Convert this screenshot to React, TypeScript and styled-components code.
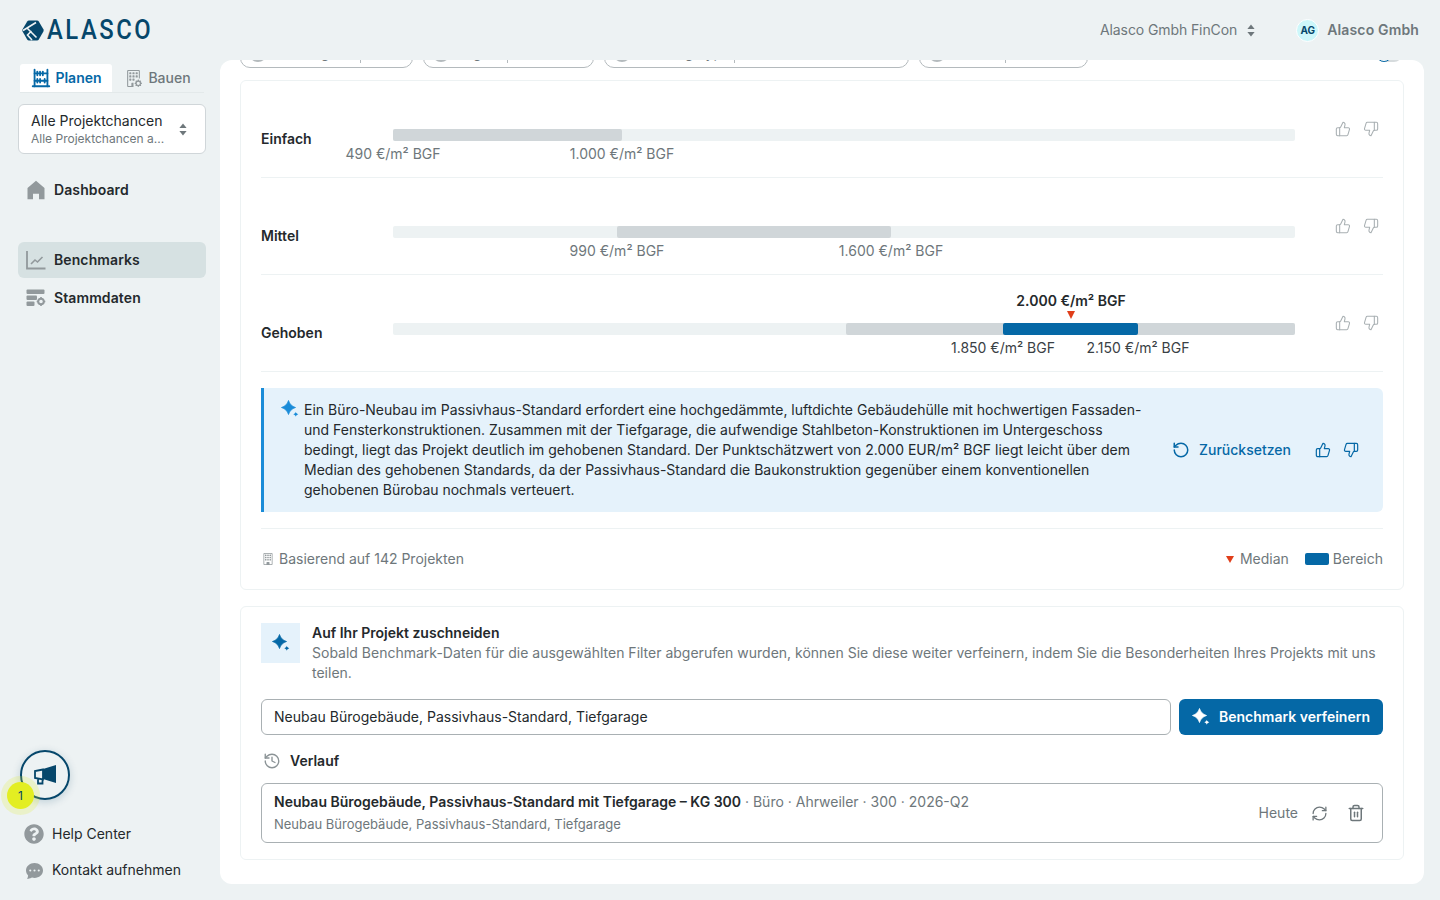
import styled, { createGlobalStyle } from "styled-components";
import { History, RefreshCw, RotateCcw, ThumbsDown, ThumbsUp, Trash2 } from "lucide-react";
import { BsBuilding, BsBuildingGear, BsChatDotsFill } from "react-icons/bs";
import { TbAbacus } from "react-icons/tb";
import { FaQuestionCircle } from "react-icons/fa";

const DARK = "#24292c";
const GREY = "#6e777b";
const BLUE = "#0568a6";
const NAVY = "#06476b";

const TIERS = [
  {
    label: "Einfach",
    range: { left: 0, right: 229 },
    low: "490 €/m² BGF",
    high: "1.000 €/m² BGF",
  },
  {
    label: "Mittel",
    range: { left: 224, right: 498 },
    low: "990 €/m² BGF",
    high: "1.600 €/m² BGF",
  },
  {
    label: "Gehoben",
    range: { left: 453, right: 902 },
    active: { left: 610, right: 745, median: 678 },
    low: "1.850 €/m² BGF",
    high: "2.150 €/m² BGF",
    medianLabel: "2.000 €/m² BGF",
  },
];

const CHIPS = [
  { width: 173, name: "Nutzung", nameWidth: 88, value: "Büro" },
  { width: 171, name: "Region", nameWidth: 52, value: "Ahrweiler" },
  { width: 305, name: "Nutzungstyp", nameWidth: 98, value: "Bürobau" },
  { width: 169, name: "Größe", nameWidth: 54, value: "300" },
];

function App() {
  return (
    <Page>
      <GlobalStyle />
      <Header>
        <Logo>
          <LogoMark />
          <LogoText>ALASCO</LogoText>
        </Logo>
        <HeaderRight>
          <CompanySwitch>
            Alasco Gmbh FinCon
            <UpDown />
          </CompanySwitch>
          <Avatar>AG</Avatar>
          <UserName>Alasco Gmbh</UserName>
        </HeaderRight>
      </Header>
      <Body>
        <Sidebar>
          <Tabs>
            <Tab $active>
              <TbAbacus size={22} />
              Planen
            </Tab>
            <Tab>
              <BsBuildingGear size={17} />
              Bauen
            </Tab>
          </Tabs>
          <ProjectSelect>
            <ProjectText>
              <ProjectName>Alle Projektchancen</ProjectName>
              <ProjectSub>Alle Projektchancen a...</ProjectSub>
            </ProjectText>
            <UpDown />
          </ProjectSelect>
          <NavGroup>
            <NavItem>
              <HomeIcon />
              Dashboard
            </NavItem>
          </NavGroup>
          <NavGroup>
            <NavItem $active>
              <ChartIcon />
              Benchmarks
            </NavItem>
            <NavItem>
              <DataIcon />
              Stammdaten
            </NavItem>
          </NavGroup>
          <SidebarBottom>
            <Announce>
              <MegaphoneIcon />
              <AnnounceBadge>1</AnnounceBadge>
            </Announce>
            <FooterLink>
              <FaQuestionCircle size={20} color="#92999c" />
              Help Center
            </FooterLink>
            <FooterLink>
              <BsChatDotsFill size={17} color="#92999c" style={{ margin: "0 1px 0 2px" }} />
              Kontakt aufnehmen
            </FooterLink>
          </SidebarBottom>
        </Sidebar>
        <Main>
          <ChipRow>
            {CHIPS.map((chip) => (
              <Chip key={chip.name} $width={chip.width}>
                <ChipDot />
                <ChipName $width={chip.nameWidth}>{chip.name}</ChipName>
                <ChipValue>{chip.value}</ChipValue>
              </Chip>
            ))}
            <Toggle>
              <ToggleKnob />
            </Toggle>
          </ChipRow>

          <Card>
            {TIERS.map((tier) => (
              <TierRow key={tier.label}>
                <TierLabel>{tier.label}</TierLabel>
                <Track>
                  <RangeBar $left={tier.range.left} $right={tier.range.right} />
                  {tier.active && (
                    <>
                      <ActiveBar $left={tier.active.left} $right={tier.active.right} />
                      <MedianValue $left={tier.active.median}>{tier.medianLabel}</MedianValue>
                      <MedianMark $left={tier.active.median} />
                    </>
                  )}
                  <RangeValue
                    $left={tier.active ? tier.active.left : tier.range.left}
                    $strong={!!tier.active}
                  >
                    {tier.low}
                  </RangeValue>
                  <RangeValue
                    $left={tier.active ? tier.active.right : tier.range.right}
                    $strong={!!tier.active}
                  >
                    {tier.high}
                  </RangeValue>
                </Track>
                <Votes $color="#a9b0b3">
                  <ThumbsUp size={16} strokeWidth={1.6} />
                  <ThumbsDown size={16} strokeWidth={1.6} />
                </Votes>
              </TierRow>
            ))}

            <Alert>
              <AlertIcon>
                <Sparkle size={18} color="#1a8cd8" />
              </AlertIcon>
              <AlertText>
                Ein Büro-Neubau im Passivhaus-Standard erfordert eine hochgedämmte, luftdichte
                Gebäudehülle mit hochwertigen Fassaden- und Fensterkonstruktionen. Zusammen mit der
                Tiefgarage, die aufwendige Stahlbeton-Konstruktionen im Untergeschoss bedingt, liegt
                das Projekt deutlich im gehobenen Standard. Der Punktschätzwert von 2.000 EUR/m² BGF
                liegt leicht über dem Median des gehobenen Standards, da der Passivhaus-Standard die
                Baukonstruktion gegenüber einem konventionellen gehobenen Bürobau nochmals
                verteuert.
              </AlertText>
              <ResetButton>
                <RotateCcw size={18} strokeWidth={2} />
                Zurücksetzen
              </ResetButton>
              <Votes $color={BLUE}>
                <ThumbsUp size={16} strokeWidth={1.8} />
                <ThumbsDown size={16} strokeWidth={1.8} />
              </Votes>
            </Alert>

            <CardFooter>
              <FooterNote>
                <BsBuilding size={12} color="#92999c" />
                Basierend auf 142 Projekten
              </FooterNote>
              <Legend>
                <LegendItem>
                  <LegendTriangle />
                  Median
                </LegendItem>
                <LegendItem>
                  <LegendSwatch />
                  Bereich
                </LegendItem>
              </Legend>
            </CardFooter>
          </Card>

          <RefineCard>
            <RefineHead>
              <RefineTile>
                <Sparkle size={18} color={BLUE} />
              </RefineTile>
              <div>
                <RefineTitle>Auf Ihr Projekt zuschneiden</RefineTitle>
                <RefineDesc>
                  Sobald Benchmark-Daten für die ausgewählten Filter abgerufen wurden, können Sie
                  diese weiter verfeinern, indem Sie die Besonderheiten Ihres Projekts mit uns
                  teilen.
                </RefineDesc>
              </div>
            </RefineHead>
            <RefineForm>
              <RefineInput readOnly value="Neubau Bürogebäude, Passivhaus-Standard, Tiefgarage" />
              <PrimaryButton>
                <Sparkle size={18} color="#fff" />
                Benchmark verfeinern
              </PrimaryButton>
            </RefineForm>
            <HistoryHead>
              <History size={18} color="#8b9396" strokeWidth={1.8} />
              Verlauf
            </HistoryHead>
            <HistoryRow>
              <div>
                <HistoryTitle>
                  <strong>Neubau Bürogebäude, Passivhaus-Standard mit Tiefgarage – KG 300</strong>
                  {" · Büro · Ahrweiler · 300 · 2026-Q2"}
                </HistoryTitle>
                <HistorySub>Neubau Bürogebäude, Passivhaus-Standard, Tiefgarage</HistorySub>
              </div>
              <HistoryActions>
                <span>Heute</span>
                <RefreshCw size={17} color={GREY} strokeWidth={1.8} />
                <Trash2 size={18} color={GREY} strokeWidth={2} />
              </HistoryActions>
            </HistoryRow>
          </RefineCard>
        </Main>
      </Body>
    </Page>
  );
}

export default App;

function UpDown() {
  return (
    <svg width="8" height="13" viewBox="0 0 8 13" fill="#6e777b" style={{ flexShrink: 0 }}>
      <path d="M4 0.5 7.6 5H0.4Z" />
      <path d="M4 12.5 0.4 8h7.2Z" />
    </svg>
  );
}

function Sparkle({ size, color }: { size: number; color: string }) {
  return (
    <svg width={size} height={size} viewBox="0 0 18 18" fill={color}>
      <path
        d="M7.5 .5C8.5 4 11 6.500 14.500 7.500 11 8.500 8.500 11 7.500 14.500 6.500 11 4 8.500 .5 7.500 4 6.500 6.500 4 7.500 .5Z"
        stroke={color}
        strokeWidth="0.8"
        strokeLinejoin="round"
      />
      <path d="M14.800 11.800C15.200 13.200 15.800 13.800 17.300 14.300 15.800 14.800 15.200 15.400 14.800 16.800 14.400 15.400 13.800 14.800 12.300 14.300 13.800 13.800 14.400 13.200 14.800 11.800Z" />
    </svg>
  );
}

function LogoMark() {
  return (
    <svg width="22" height="21" viewBox="0 0 22 21">
      <path
        d="M7 .5h8c.8 0 1.400.4 1.800 1l4.600 7.800c.4.700.4 1.500 0 2.200l-4.600 8c-.4.600-1 1-1.800 1H7c-.8 0-1.400-.4-1.800-1L.6 11.500c-.4-.7-.4-1.500 0-2.200L5.200 1.500C5.600.9 6.200.5 7 .5Z"
        fill="#06476b"
      />
      <path
        d="M1 10.500 14 2.500M5 8l9.500 9.500M10 20l-4.500-5 4-4"
        fill="none"
        stroke="#edf2f3"
        strokeWidth="1.600"
      />
    </svg>
  );
}

function HomeIcon() {
  return (
    <svg width="18" height="20" viewBox="0 0 18 20" fill="#92999c">
      <path d="M9 .8 17.500 8v11.200h-5.500v-5.500H6v5.500H.5V8Z" />
    </svg>
  );
}

function ChartIcon() {
  return (
    <svg width="20" height="20" viewBox="0 0 20 20" fill="none" stroke="#92999c">
      <path d="M1 1v17.500h18.500" strokeWidth="1.800" />
      <path d="M5 14l4-4 2.500 2 5-5" strokeWidth="1.600" />
    </svg>
  );
}

function DataIcon() {
  return (
    <svg width="20" height="18" viewBox="0 0 20 18" fill="#92999c">
      <rect x="0.500" y="0.500" width="18" height="4.500" rx="1" />
      <rect x="0.500" y="6.500" width="10.500" height="4.500" rx="1" />
      <rect x="0.500" y="12.500" width="8" height="4.500" rx="1" />
      <circle cx="15" cy="12.500" r="2.800" fill="none" stroke="#92999c" strokeWidth="2" />
      <path d="M15 8v2M15 15v2M10.700 12.500h2M17.300 12.500h2" stroke="#92999c" strokeWidth="1.600" />
    </svg>
  );
}

function MegaphoneIcon() {
  return (
    <svg width="24" height="24" viewBox="0 0 24 24">
      <path d="M23 2v18L10 16V6Z" fill="#06476b" />
      <path
        d="M10 6.500 2 8v7l8 1.500ZM5 16v4.500h4.500V17"
        fill="none"
        stroke="#06476b"
        strokeWidth="1.800"
      />
    </svg>
  );
}

const GlobalStyle = createGlobalStyle`
  html, body {
    margin: 0;
    padding: 0;
    height: 100%;
    overflow: hidden;
    background: #edf2f3;
    color: ${DARK};
    font-family: Inter, "Liberation Sans", sans-serif;
    font-size: 14px;
    line-height: 20px;
  }
  * {
    box-sizing: border-box;
  }
`;

const Page = styled.div`
  width: 1440px;
  height: 900px;
  display: flex;
  flex-direction: column;
`;

const Header = styled.header`
  height: 60px;
  flex-shrink: 0;
  display: flex;
  align-items: center;
  justify-content: space-between;
  padding: 0 21px 0 22px;
`;

const Logo = styled.div`
  display: flex;
  align-items: center;
  gap: 3px;
`;

const LogoText = styled.span`
  font-family: Roboto, sans-serif;
  font-size: 28px;
  line-height: 30px;
  font-weight: 500;
  letter-spacing: 3px;
  color: ${NAVY};
  transform: scaleX(0.85);
  transform-origin: left center;
`;

const HeaderRight = styled.div`
  display: flex;
  align-items: center;
`;

const CompanySwitch = styled.div`
  display: flex;
  align-items: center;
  gap: 10px;
  letter-spacing: -0.1px;
  color: ${GREY};
  margin-right: 41px;
`;

const Avatar = styled.div`
  width: 23px;
  height: 23px;
  border-radius: 50%;
  border: 1px solid #fff;
  background: #cdf7fa;
  color: ${NAVY};
  font-size: 10px;
  font-weight: 700;
  display: flex;
  align-items: center;
  justify-content: center;
  margin-right: 8px;
`;

const UserName = styled.div`
  color: ${GREY};
  font-weight: 600;
  letter-spacing: 0.15px;
`;

const Body = styled.div`
  flex: 1;
  min-height: 0;
  display: flex;
`;

const Sidebar = styled.aside`
  width: 220px;
  flex-shrink: 0;
  display: flex;
  flex-direction: column;
  padding: 4px 14px 12px 18px;
`;

const Tabs = styled.div`
  display: flex;
  margin-left: 2px;
  margin-right: 2px;
  height: 29px;
  border-bottom: 1px solid #e3e9ea;
`;

const Tab = styled.div<{ $active?: boolean }>`
  flex: 1;
  display: flex;
  align-items: center;
  justify-content: center;
  gap: ${({ $active }) => ($active ? 3 : 6)}px;
  height: 28px;
  border-radius: 3px 3px 0 0;
  font-weight: ${({ $active }) => ($active ? 600 : 500)};
  color: ${({ $active }) => ($active ? BLUE : GREY)};
  background: ${({ $active }) => ($active ? "#fff" : "transparent")};
  svg {
    flex-shrink: 0;
    color: ${({ $active }) => ($active ? BLUE : "#92999c")};
  }
`;

const ProjectSelect = styled.div`
  margin-top: 11px;
  height: 50px;
  display: flex;
  align-items: center;
  justify-content: space-between;
  padding: 0 18px 0 12px;
  background: #fff;
  border: 1px solid #d0d6d9;
  border-radius: 6px;
`;

const ProjectText = styled.div`
  display: flex;
  flex-direction: column;
  padding-top: 2px;
`;

const ProjectName = styled.span`
  line-height: 18px;
  color: ${DARK};
`;

const ProjectSub = styled.span`
  font-size: 12px;
  line-height: 18px;
  color: ${GREY};
`;

const NavGroup = styled.div`
  display: flex;
  flex-direction: column;
  gap: 2px;
  margin-top: 18px;
  & + & {
    margin-top: 34px;
  }
`;

const NavItem = styled.div<{ $active?: boolean }>`
  height: 36px;
  display: flex;
  align-items: center;
  gap: 8px;
  padding-left: 8px;
  border-radius: 6px;
  font-weight: 600;
  letter-spacing: 0.1px;
  color: ${DARK};
  background: ${({ $active }) => ($active ? "#d6e1e2" : "transparent")};
  svg {
    width: 20px;
    flex-shrink: 0;
  }
`;

const SidebarBottom = styled.div`
  margin-top: auto;
  display: flex;
  flex-direction: column;
`;

const Announce = styled.div`
  position: relative;
  width: 50px;
  height: 50px;
  margin: 0 0 16px 2px;
  border-radius: 50%;
  border: 2px solid ${NAVY};
  display: flex;
  align-items: center;
  justify-content: center;
  box-shadow: 0 2px 8px rgba(6, 71, 107, 0.2);
`;

const AnnounceBadge = styled.span`
  position: absolute;
  left: -15px;
  top: 30px;
  width: 27px;
  height: 27px;
  border-radius: 50%;
  background: #e3ee22;
  box-shadow: 0 0 0 6px rgba(227, 238, 34, 0.2);
  color: ${NAVY};
  font-size: 12px;
  display: flex;
  align-items: center;
  justify-content: center;
`;

const FooterLink = styled.div`
  height: 36px;
  display: flex;
  align-items: center;
  gap: 8px;
  padding-left: 6px;
  color: ${DARK};
`;

const Main = styled.main`
  width: 1204px;
  height: 824px;
  background: #fff;
  border-radius: 12px;
  overflow: hidden;
  padding: 0 20px;
`;

const ChipRow = styled.div`
  display: flex;
  align-items: center;
  gap: 10px;
  height: 36px;
  margin-top: -28px;
  margin-bottom: 12px;
`;

const Chip = styled.div<{ $width: number }>`
  width: ${({ $width }) => $width}px;
  height: 36px;
  display: flex;
  align-items: center;
  gap: 6px;
  padding: 6px 8px 0;
  border: 1px solid #b4babd;
  border-radius: 10px;
  color: ${GREY};
`;

const ChipDot = styled.span`
  width: 18px;
  height: 18px;
  border-radius: 50%;
  background: #b4babd;
  flex-shrink: 0;
`;

const ChipName = styled.span<{ $width: number }>`
  width: ${({ $width }) => $width}px;
  border-right: 1px solid #b4babd;
  flex-shrink: 0;
`;

const ChipValue = styled.span``;

const Toggle = styled.div`
  margin-left: auto;
  margin-right: 2px;
  width: 26px;
  height: 16px;
  margin-top: 8px;
  border-radius: 8px;
  background: #d6dbdd;
  position: relative;
`;

const ToggleKnob = styled.span`
  position: absolute;
  left: 0;
  top: 0;
  width: 16px;
  height: 16px;
  border-radius: 50%;
  background: #fff;
  border: 1.500px solid ${BLUE};
`;

const Card = styled.section`
  border: 1px solid #edf2f3;
  border-radius: 6px;
  padding: 0 20px;
`;

const TierRow = styled.div`
  height: 97px;
  padding-top: 39px;
  display: flex;
  align-items: flex-start;
  border-bottom: 1px solid #edf2f3;
`;

const TierLabel = styled.div`
  width: 132px;
  margin-top: 9px;
  font-weight: 600;
  color: ${DARK};
`;

const Track = styled.div`
  position: relative;
  width: 902px;
  height: 12px;
  margin-top: 9px;
  background: #edf2f3;
  border-radius: 2px;
`;

const RangeBar = styled.div<{ $left: number; $right: number }>`
  position: absolute;
  top: 0;
  bottom: 0;
  left: ${({ $left }) => $left}px;
  width: ${({ $left, $right }) => $right - $left}px;
  background: #d0d6d9;
  border-radius: 2px;
`;

const ActiveBar = styled(RangeBar)`
  background: ${BLUE};
`;

const RangeValue = styled.span<{ $left: number; $strong: boolean }>`
  position: absolute;
  top: 16px;
  left: ${({ $left }) => $left}px;
  transform: translateX(-50%);
  line-height: 18px;
  white-space: nowrap;
  color: ${({ $strong }) => ($strong ? "#3a4145" : GREY)};
`;

const MedianValue = styled.span<{ $left: number }>`
  position: absolute;
  top: -31px;
  left: ${({ $left }) => $left}px;
  transform: translateX(-50%);
  line-height: 18px;
  white-space: nowrap;
  font-weight: 600;
  color: ${DARK};
`;

const MedianMark = styled.span<{ $left: number }>`
  position: absolute;
  top: -12px;
  left: ${({ $left }) => $left - 4}px;
  border-left: 4px solid transparent;
  border-right: 4px solid transparent;
  border-top: 8px solid #e03e1a;
`;

const Votes = styled.div<{ $color: string }>`
  margin-left: 40px;
  display: flex;
  gap: 12px;
  color: ${({ $color }) => $color};
  height: 18px;
  align-items: center;
`;

const Alert = styled.div`
  margin-top: 16px;
  height: 124px;
  display: flex;
  align-items: center;
  padding: 12px 24px 12px 17px;
  background: #e5f2fb;
  border-left: 3px solid #1a8cd8;
  border-radius: 0 6px 6px 0;
  ${Votes} {
    margin-left: 24px;
  }
`;

const AlertIcon = styled.div`
  align-self: flex-start;
  width: 23px;
  flex-shrink: 0;
  display: flex;
`;

const AlertText = styled.p`
  margin: 0;
  width: 838px;
  flex-shrink: 0;
  color: ${DARK};
`;

const ResetButton = styled.div`
  margin-left: 30px;
  display: flex;
  align-items: center;
  gap: 9px;
  white-space: nowrap;
  font-weight: 500;
  color: ${BLUE};
`;

const CardFooter = styled.div`
  margin-top: 16px;
  height: 61px;
  border-top: 1px solid #edf2f3;
  display: flex;
  align-items: center;
  justify-content: space-between;
  color: ${GREY};
`;

const FooterNote = styled.div`
  display: flex;
  align-items: center;
  gap: 5px;
  padding-left: 1px;
`;

const Legend = styled.div`
  display: flex;
  gap: 16px;
`;

const LegendItem = styled.div`
  display: flex;
  align-items: center;
  gap: 4px;
`;

const LegendTriangle = styled.span`
  margin-right: 2px;
  border-left: 4px solid transparent;
  border-right: 4px solid transparent;
  border-top: 7px solid #e03e1a;
`;

const LegendSwatch = styled.span`
  width: 24px;
  height: 12px;
  border-radius: 2px;
  background: ${BLUE};
`;

const RefineCard = styled(Card)`
  margin-top: 16px;
  padding: 16px 20px;
`;

const RefineHead = styled.div`
  display: flex;
  align-items: flex-start;
  gap: 12px;
`;

const RefineTile = styled.div`
  width: 39px;
  height: 40px;
  flex-shrink: 0;
  background: #e5f2fb;
  display: flex;
  align-items: center;
  justify-content: center;
`;

const RefineTitle = styled.div`
  font-weight: 600;
  color: ${DARK};
`;

const RefineDesc = styled.div`
  color: ${GREY};
`;

const RefineForm = styled.div`
  margin-top: 16px;
  display: flex;
  gap: 8px;
`;

const RefineInput = styled.input`
  flex: 1;
  height: 36px;
  padding: 0 12px 2px;
  border: 1px solid #a9b0b3;
  border-radius: 6px;
  outline: 0;
  font: inherit;
  color: ${DARK};
`;

const PrimaryButton = styled.button`
  width: 204px;
  height: 36px;
  border: 0;
  border-radius: 6px;
  background: ${BLUE};
  color: #fff;
  font: inherit;
  font-weight: 600;
  display: flex;
  align-items: center;
  justify-content: center;
  gap: 9px;
`;

const HistoryHead = styled.div`
  margin-top: 16px;
  display: flex;
  align-items: center;
  gap: 9px;
  padding-left: 2px;
  font-weight: 600;
  color: ${DARK};
`;

const HistoryRow = styled.div`
  margin-top: 12px;
  height: 60px;
  display: flex;
  align-items: center;
  justify-content: space-between;
  padding: 0 17px 0 12px;
  border: 1px solid #a9b0b3;
  border-radius: 6px;
`;

const HistoryTitle = styled.div`
  color: ${GREY};
  strong {
    font-weight: 600;
    color: ${DARK};
  }
`;

const HistorySub = styled.div`
  margin-top: 2px;
  font-size: 13px;
  color: ${GREY};
`;

const HistoryActions = styled.div`
  display: flex;
  align-items: center;
  gap: 13px;
  color: ${GREY};
  svg:last-child {
    margin-left: 6px;
  }
`;
